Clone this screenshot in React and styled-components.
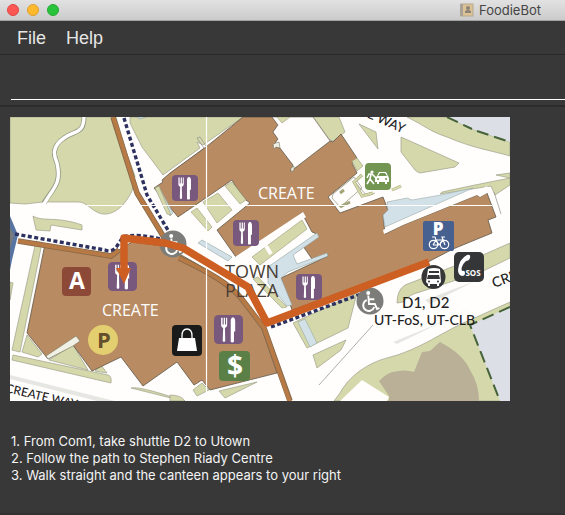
import React from "react";
import styled, { createGlobalStyle } from "styled-components";

const GlobalStyle = createGlobalStyle`
  * { box-sizing: border-box; }
  body {
    margin: 0;
    background: #383838;
    font-family: Inter, "Liberation Sans", sans-serif;
  }
`;

const Window = styled.div`
  display: flex;
  flex-direction: column;
  min-height: 100vh;
  background: #383838;
  color: #f4f4f4;
  overflow: hidden;
`;

const TitleBar = styled.header`
  display: flex;
  align-items: center;
  justify-content: space-between;
  height: 21px;
  padding: 0 24px 0 7px;
  background: linear-gradient(#e2e2e2, #cbcbcb);
  border-bottom: 1px solid #a2a2a2;
`;

const WindowButtons = styled.div`
  display: flex;
  gap: 8px;
`;

const WindowButton = styled.button`
  width: 12px;
  height: 12px;
  padding: 0;
  border: 1px solid ${(p) => p.$edge};
  border-radius: 50%;
  background: ${(p) => p.$fill};
`;

const Title = styled.h1`
  display: flex;
  align-items: center;
  gap: 5px;
  margin: 0;
  color: #444;
  font-family: Inter, sans-serif;
  font-size: 13px;
  line-height: 18px;
  font-weight: 400;
`;

const MenuBar = styled.nav`
  display: flex;
  gap: 20px;
  height: 34px;
  padding: 0 17px;
  border-bottom: 1px solid #292929;
`;

const MenuButton = styled.button`
  padding: 0;
  border: 0;
  background: none;
  color: #e6e6e6;
  font-family: "Liberation Sans", sans-serif;
  font-size: 18px;
  line-height: 32px;
`;

const CommandArea = styled.div`
  height: 52px;
  padding: 10px 0 5px 11px;
  border-bottom: 2px solid #2b2b2b;
`;

const CommandInput = styled.input`
  display: block;
  width: 100%;
  height: 35px;
  padding: 0;
  border: 0;
  border-bottom: 1px solid #fff;
  border-radius: 0;
  outline: none;
  background: transparent;
  color: #fff;
  font-size: 14px;
`;

const Result = styled.main`
  flex: 1;
  padding: 10px 10px 20px;
  border-bottom: 2px solid #323232;
`;

const MapPicture = styled.svg`
  display: block;
  width: 500px;
  max-width: 100%;
  height: auto;
`;

const Steps = styled.ol`
  margin: 32px 0 0;
  padding: 0 0 0 1px;
  list-style: none;
  font-family: Inter, sans-serif;
  font-size: 13px;
  line-height: 17px;
`;

const MapText = styled.text`
  font-family: "Open Sans", "Noto Sans", sans-serif;
  font-size: ${(p) => p.$size || 16}px;
  font-weight: ${(p) => p.$weight || 400};
  fill: ${(p) => p.$color || "#fff"};
`;

const StreetText = styled(MapText)`
  font-family: Lato, "Open Sans", sans-serif;
  font-weight: 500;
  fill: #1f1f1f;
`;

const steps = [
  "1. From Com1, take shuttle D2 to Utown",
  "2. Follow the path to Stephen Riady Centre",
  "3. Walk straight and the canteen appears to your right",
];

const GREEN = "#d4d8aa";
const BROWN = "#b88b62";
const BLUE = "#d2e1e8";

const outlinedGreens = [
  "M10 117H116L127 154L135 176L132 191C123 210 109 217 99 213C89 209 87 202 78 202L43 202L25 204L10 203Z",
  "M130 117V123L142 147L163 175L200 148L197 142L203 145L243 117Z",
  "M33 216C43 222 57 216 82 225L82 230L51 225L50 231L36 230Z",
  "M313 117H339L345 132L333 141L330 140Z",
  "M407 117C427 127 429 131 447 137C475 149 494 151 510 156V142L472 129L447 117Z",
  "M401 137L459 163L455 167L420 173Q417 172 415 170L401 152Z",
  "M359 124L376 132L378 149Z",
  "M442 192L470 186L510 178V185L495 195L491 186L440 194Z",
  "M496 175L510 173V178Z",
  "M510 243L483 255L405 285Q397 290 397 303L403 302Q410 294 420 292L481 272L510 258Z",
  "M340 393C352 371 375 361 387 358C420 350 445 330 470 320L510 302V401H334Z",
  "M293 323L357 293L348 328L307 348Z",
  "M313 355L346 340L341 350L317 368Z",
  "M36 241L42 243L20 352L12 350Z",
  "M10 282L13 283L10 300Z",
  "M13 355L108 375Q112 376 111 383L12 360Z",
  "M27 335L42 354L38 357L22 352Z",
  "M49 360L73 345L88 370Z",
  "M95 371L101 365L107 373Z",
  "M131 388Q139 386 175 398V399Z",
  "M193 390L202 383L209 390L197 396Z",
  "M219 391L257 382L225 398Z",
  "M170 395Q181 395 185 401H170Z",
];

const courtyardGreens = [
  "M225 186L232 182L246 200L240 204Z",
  "M203 202L218 193L232 210L217 223Z",
  "M191 212L197 208L212 227L208 231Z",
  "M252 257L302 220L307 229L260 265Z",
  "M277 117H290L282 123Z",
  "M352 161L357 158L363 166L357 171Z",
  "M155 188L159 186L171 215L167 214Z",
  "M253 279L258 277L287 307L282 308Z",
];

const Cutlery = ({ x, y, size = 26 }) => (
  <svg x={x} y={y} width={size} height={size} viewBox="0 0 26 26">
    <rect width="26" height="26" rx="4" fill="#78587d" />
    <path
      d="M6.4 2.5V9.5Q6.5 11.2 8.2 11.7L7.8 23.2Q8.9 24.7 10.1 23.2L9.8 11.7Q11.8 11 11.8 9.3V2.5H10.8V8.6H9.9V2.5H8.7V8.6H7.7V2.5ZM15 24V4.5Q15.4 2.1 17 2.1Q19 2.4 19 6V14.7H17.9V24Q16.4 25.2 15 24Z"
      fill="#fff"
    />
  </svg>
);

const Wheelchair = ({ x, y }) => (
  <svg x={x - 14} y={y - 14} width="28" height="28" viewBox="0 0 28 28">
    <circle cx="14" cy="14" r="13.5" fill="#7c7d79" />
    <circle cx="12.2" cy="6" r="2" fill="#fff" />
    <path
      d="M12.3 8.5L13 17H18.8L21.1 22L23.4 21M13 12.3H18.3M10.7 13.2A5.6 5.6 0 1 0 18.2 20"
      fill="none"
      stroke="#fff"
      strokeWidth="1.9"
    />
  </svg>
);

function CampusMap() {
  return (
    <MapPicture viewBox="10 117 500 284" role="img" aria-label="Route map to the canteen">
      <rect x="10" y="117" width="500" height="284" fill="#fffefd" />
      <g fill={GREEN} stroke="#9da08b" strokeWidth=".7">
        {outlinedGreens.map((d) => <path key={d} d={d} />)}
      </g>
      <path d="M447 117L472 129L510 142V117ZM470 325L510 307V401H500Z" fill="#dcdfe5" />
      <path d="M447 117L472 129M477 131L510 142M510 307L470 325L500 401" fill="none" stroke="#456239" strokeWidth="2" strokeDasharray="12 6" />
      <path d="M379 381Q387 373 393 372Q405 369 414 372L422 352L430 351L440 342Q463 354 470 370Q479 384 479 401H389V396Z" fill="#b9b097" />
      <path d="M362 380L389 397L387 401H340Z" fill="#fffefd" />
      <path d="M84 117C84 135 74 130 64 138C51 147 54 156 57 163C62 184 53 188 44 203" fill="none" stroke="#969986" strokeWidth="5" />
      <path d="M84 116C84 135 74 130 64 138C51 147 54 156 57 163C62 184 53 188 44 204" fill="none" stroke="#fff" strokeWidth="3.4" />
      <path d="M393 342L430 327L475 306L397 344ZM425 300L475 281L430 304ZM10 375L115 401H97L10 379Z" fill="#e6e6e2" />
      <path d="M319 385L373 325M501 214L494 192M171 173L204 148L197 138L200 137L206 146" fill="none" stroke="#999b92" strokeWidth=".8" />

      <path d="M10 216L18 235L12 260L10 270Z" fill="#5874a1" />
      <path d="M10 228L14 235L10 249Z" fill="#77797c" />

      <g fill={BROWN} stroke="#5f5849" strokeWidth=".8">
        <path d="M162 180L170 173L206 147L243 117H272L278 125L273 132L278 139L273 146L280 148L293 165L291 171L330 141L333 142L341 134L357 158L352 163L357 173L328 197L340 213L383 197L388 210L383 215L385 234L403 225L477 195L480 197L487 193L496 217L488 220L492 233L453 249L428 262L292 310L281 278L328 256L327 254L312 259L303 246L317 234L312 232L304 217L302 213L238 260L217 230L250 203L246 200L236 187L232 180L178 217L154 188L163 182Z" />
        <path d="M45 244L112 254L132 242L164 246C186 257 210 271 230 285C248 301 259 317 263 332L277 373L210 390L202 380L194 385L177 362L143 386L121 357L92 371L73 345L48 359L27 333Z" />
      </g>
      <path d="M272 117L278 125L273 132L278 139L273 146L280 148L293 165L291 171L330 141L313 117Z" fill="#fffefd" stroke="#5f5849" strokeWidth=".6" />
      <path d="M291 168L294 166L294 170L291 172ZM273 144L279 142L280 148L276 147L274 149ZM48 359L46 356L76 336L80 341L73 346Z" fill="#f0f0e4" stroke="#777763" strokeWidth=".6" />
      <path d="M383 230L401 221L477 191L487 186L489 192L480 197L477 195L403 225L384 234Z" fill="#fffefd" />
      <path d="M387 202L407 198L412 200L441 195L473 188L385 227L383 215L388 210Z" fill={BLUE} stroke="#9aa9aa" strokeWidth=".6" />
      <path d="M198 243L202 240L232 257L228 261ZM268 267L317 233L319 237L293 255L297 264L327 253L328 256L288 272L281 278L292 305L287 306L268 283ZM155 188L159 187L173 213L170 216ZM137 117H146L140 119Z" fill={BLUE} stroke="#93a2a0" strokeWidth=".6" />
      <path d="M298 322L305 319L317 343L310 347Z" fill={BLUE} stroke="#9ba79b" strokeWidth=".6" />
      <path d="M235 257L303 212L306 217L238 264Z" fill="#fffefd" />
      <g fill={GREEN} stroke="#9a9c7c" strokeWidth=".6">
        {courtyardGreens.map((d) => <path key={d} d={d} />)}
      </g>
      <path d="M333 194L354 177L362 188L340 207L332 198ZM354 181L367 196L375 193" fill="#fffefd" stroke="#797b61" strokeWidth=".6" />
      <path d="M362 175L354 182L362 196L373 193M392 190L401 186M340 193L344 190M340 207L350 202" fill="none" stroke="#a3a577" strokeWidth="3" />
      <path d="M362 175L354 182L362 196L373 193M392 190L401 186" fill="none" stroke={GREEN} strokeWidth="2" />
      <path d="M266 246L271 254" stroke="#fffefd" strokeWidth="4" />

      <g fill="none" strokeLinejoin="round">
        <path d="M113 117L137 193L165 239M18 241L111 256L119 250M179 258C211 273 229 284 241 298L264 328L290 401" stroke="#846849" strokeWidth="5.5" />
        <path d="M113 116L137 193L165 239M18 241L111 256L119 250M179 258C211 273 229 284 241 298L264 328L290 402" stroke="#b87a45" strokeWidth="4" />
        <path d="M124 118L147 195L169 232M15 234L105 250Q112 253 117 246L123 237Q137 233 165 240M271 327L364 293" stroke="#2d315f" strokeWidth="3.4" strokeDasharray="4 2.5" />
      </g>
      <path d="M206.5 117V395M87 205.5H492" stroke="#fff" strokeWidth="1.2" />

      <MapText x="258" y="199">CREATE</MapText>
      <MapText x="102" y="316">CREATE</MapText>
      <MapText x="225" y="278" $size={18} $color="#493e35">TOWN</MapText>
      <MapText x="225" y="297" $size={18} $color="#493e35">PLAZA</MapText>
      <StreetText x="402" y="308" $size={15}>D1, D2</StreetText>
      <StreetText x="374" y="325" $size={14}>UT-FoS, UT-CLB</StreetText>
      <StreetText x="5" y="392" $size={12} transform="rotate(13 5 392)">CREATE WAY</StreetText>
      <StreetText x="330" y="101" $size={13} transform="rotate(24 330 101)">CREATE WAY</StreetText>
      <StreetText x="494" y="288" $size={14} transform="rotate(-20 494 288)">CREATE</StreetText>

      <Cutlery x={172} y={175} />
      <Cutlery x={233} y={220} />
      <Cutlery x={296} y={274} />
      <Cutlery x={214} y={315} size={29} />
      <Cutlery x={108} y={262} size={29} />
      <Wheelchair x={173} y={244} />
      <Wheelchair x={370} y={301} />

      <path d="M429 262L267 323L248 287L183 248L165 243L124 238V270" fill="none" stroke="#cd5f23" strokeWidth="7.5" strokeLinejoin="round" />
      <path d="M116 268H131L124 284Z" fill="#cd5f23" />

      <rect x="62" y="267" width="29" height="29" rx="4" fill="#8c4938" />
      <MapText x="77" y="289" textAnchor="middle" $size={23} $weight={700}>A</MapText>
      <circle cx="103" cy="340" r="15" fill="#e4cf70" />
      <MapText x="104" y="348" textAnchor="middle" $size={22} $weight={700} $color="#64502c">P</MapText>

      <rect x="172" y="325" width="30" height="31" rx="4" fill="#191b1a" />
      <path d="M179 338H195L197 351H177Z" fill="#fff" />
      <path d="M182 341V336Q182 329 187 329Q192 329 192 336V341" fill="none" stroke="#fff" strokeWidth="1.3" />
      <rect x="219" y="351" width="31" height="30" rx="4" fill="#5b8047" />
      <MapText x="235" y="376" textAnchor="middle" $size={28} $weight={700}>$</MapText>

      <rect x="365" y="163" width="26" height="27" rx="4" fill="#729552" />
      <circle cx="372" cy="172" r="1.6" fill="#fff" />
      <path d="M371 174L370 179L374 184M370 179L367 184M367 178L369 174L372 174L376 178" fill="none" stroke="#fff" strokeWidth="1.6" />
      <path d="M377 176L379 172H386L388 176L389 178V182H387V184H385V182H379V184H377V182H375V178Z" fill="#fff" />
      <path d="M378 176L380 173H385L387 176Z" fill="#729552" />
      <circle cx="378" cy="179" r="1" fill="#729552" /><circle cx="386" cy="179" r="1" fill="#729552" />

      <rect x="423" y="221" width="31" height="30" rx="2" fill="#466090" />
      <MapText x="438" y="235" textAnchor="middle" $size={17} $weight={800}>P</MapText>
      <g fill="none" stroke="#fff" strokeWidth="1.2">
        <circle cx="433.5" cy="244.5" r="4.2" /><circle cx="444.5" cy="244.5" r="4.2" />
        <path d="M433 245L436 240H443L439 245H433M436 240L435 237H432M439 245L436 240M445 245L442 237H445" />
      </g>

      <circle cx="433.5" cy="277" r="12" fill="#343637" />
      <path d="M428 269Q434 267 440 269L441 282L439 284V286H437V284H430V286H428V284L426 282Z" fill="#fff" />
      <path d="M429 271H439V273H429ZM428 275H439L440 279H427Z" fill="#343637" />
      <circle cx="429" cy="281.5" r="1" fill="#343637" /><circle cx="438" cy="281.5" r="1" fill="#343637" />

      <rect x="454" y="252" width="30" height="30" rx="5" fill="#343637" />
      <path d="M467 255Q471 254 470 258Q469 261 466 261C462 265 461 268 462 271Q465 270 465 273Q465 276 462 276Q458 275 458 270Q459 259 467 255Z" fill="#fff" />
      <MapText x="473" y="276" textAnchor="middle" $size={8} $weight={700}>SOS</MapText>
    </MapPicture>
  );
}

export default function App() {
  return (
    <>
      <GlobalStyle />
      <Window>
        <TitleBar>
          <WindowButtons>
            <WindowButton aria-label="Close" $fill="#fc5753" $edge="#df4744" />
            <WindowButton aria-label="Minimize" $fill="#fdb92e" $edge="#de9f34" />
            <WindowButton aria-label="Zoom" $fill="#28c33b" $edge="#27aa35" />
          </WindowButtons>
          <Title>
            <svg width="14" height="14" viewBox="0 0 14 14" aria-hidden="true">
              <rect x="1" y="1" width="12" height="12" fill="#dcc395" stroke="#b6a88e" />
              <path d="M0 1H3V13H0Z" fill="#aaa197" />
              <circle cx="8" cy="5" r="2" fill="#8d8478" />
              <path d="M5 10V8L7 7H9L11 8V10Z" fill="#8d8478" />
            </svg>
            FoodieBot
          </Title>
        </TitleBar>
        <MenuBar>
          <MenuButton>File</MenuButton>
          <MenuButton>Help</MenuButton>
        </MenuBar>
        <CommandArea>
          <CommandInput aria-label="Command" />
        </CommandArea>
        <Result>
          <CampusMap />
          <Steps>
            {steps.map((step) => <li key={step}>{step}</li>)}
          </Steps>
        </Result>
      </Window>
    </>
  );
}
